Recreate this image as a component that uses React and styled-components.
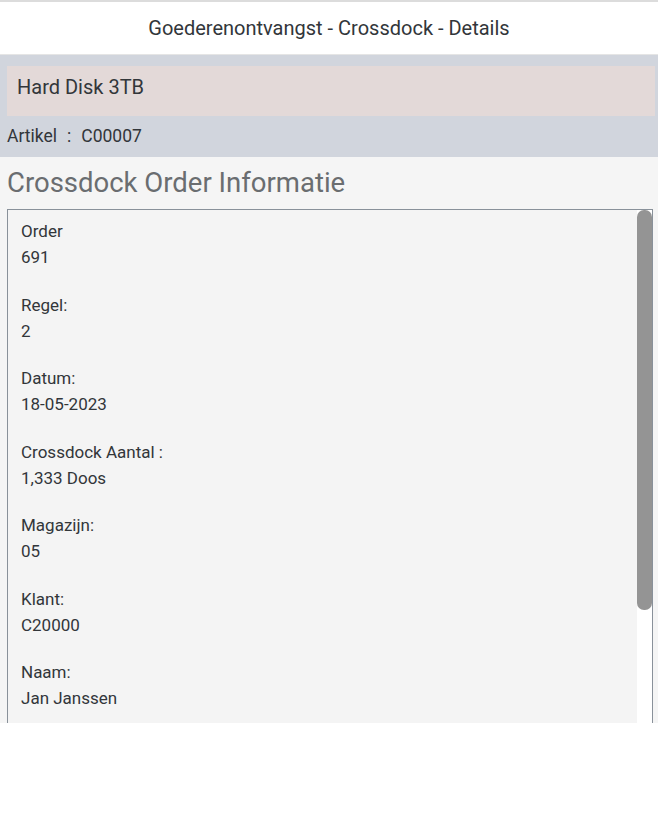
import React from 'react';
import styled, { createGlobalStyle } from 'styled-components';

const GlobalStyle = createGlobalStyle`
  html, body {
    margin: 0;
    padding: 0;
    background: #ffffff;
  }

  body {
    font-family: Roboto, "Liberation Sans", Arial, sans-serif;
    color: #32363a;
  }
`;

const Page = styled.div`
  display: flex;
  flex-direction: column;
  width: 658px;
`;

const Header = styled.header`
  display: flex;
  align-items: center;
  justify-content: center;
  height: 52px;
  border-top: 2px solid #dcdcdc;
  border-bottom: 1px solid #e5e5e5;
  background: #ffffff;
  font-size: 20px;
  color: #32363a;
`;

const ItemBand = styled.section`
  display: flex;
  flex-direction: column;
  background: #d1d5dd;
  padding: 11px 3px 0 7px;
  height: 91px;
`;

const ItemTitle = styled.div`
  height: 50px;
  box-sizing: border-box;
  padding: 9px 0 0 10px;
  background: #e3d9d8;
  font-size: 20px;
  line-height: 24px;
`;

const ItemMeta = styled.div`
  display: flex;
  align-items: center;
  gap: 10px;
  height: 40px;
  font-size: 17.5px;
`;

const Body = styled.main`
  display: flex;
  flex-direction: column;
  background: #f5f5f5;
  padding: 0 5px 0 7px;
`;

const SectionTitle = styled.h2`
  margin: 0;
  height: 52px;
  line-height: 52px;
  font-size: 27.5px;
  font-weight: 400;
  color: #6a6d70;
`;

const InfoPanel = styled.div`
  display: flex;
  height: 513px;
  border: 1px solid #89919a;
  border-bottom: none;
  background: #ffffff;
  overflow: hidden;
`;

const FieldList = styled.dl`
  flex: 1;
  margin: 0;
  padding: 8px 13px 10px;
  display: flex;
  flex-direction: column;
  gap: 21.5px;
  background: #f4f4f4;
`;

const Field = styled.div`
  display: flex;
  flex-direction: column;
  font-size: 17px;
  line-height: 26px;
`;

const Label = styled.dt`
  margin: 0;
`;

const Value = styled.dd`
  margin: 0;
`;

const ScrollTrack = styled.div`
  width: 15px;
  flex-shrink: 0;
  background: #ffffff;
`;

const ScrollThumb = styled.div`
  height: ${p => p.$size}px;
  border-radius: 7px;
  background: #949494;
`;

const fields = [
  ['Order', '691'],
  ['Regel:', '2'],
  ['Datum:', '18-05-2023'],
  ['Crossdock Aantal :', '1,333 Doos'],
  ['Magazijn:', '05'],
  ['Klant:', 'C20000'],
  ['Naam:', 'Jan Janssen'],
];

export default function App() {
  return (
    <>
      <GlobalStyle />
      <Page>
        <Header>Goederenontvangst - Crossdock - Details</Header>
        <ItemBand>
          <ItemTitle>Hard Disk 3TB</ItemTitle>
          <ItemMeta>
            <span>Artikel</span>
            <span>:</span>
            <span>C00007</span>
          </ItemMeta>
        </ItemBand>
        <Body>
          <SectionTitle>Crossdock Order Informatie</SectionTitle>
          <InfoPanel>
            <FieldList>
              {fields.map(([label, value]) => (
                <Field key={label}>
                  <Label>{label}</Label>
                  <Value>{value}</Value>
                </Field>
              ))}
            </FieldList>
            <ScrollTrack>
              <ScrollThumb $size={400} />
            </ScrollTrack>
          </InfoPanel>
        </Body>
      </Page>
    </>
  );
}
